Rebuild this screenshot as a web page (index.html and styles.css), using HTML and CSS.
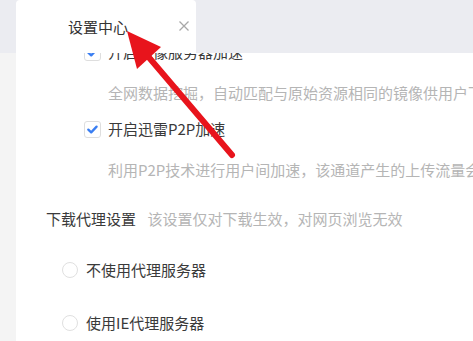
FILE: index.html
```html
<!DOCTYPE html>
<html lang="zh-CN">
<head>
<meta charset="utf-8">
<title>设置中心</title>
<link rel="stylesheet" href="styles.css">
</head>
<body>
<div class="window">
  <header class="tabbar">
    <div class="tab">
      <span class="tab-title">设置中心</span>
      <svg class="tab-close" width="10" height="10" viewBox="0 0 10 10"><path d="M0.5 0.5L9.5 9.5M9.5 0.5L0.5 9.5" stroke="#a8a8a8" stroke-width="1.3" fill="none"/></svg>
    </div>
  </header>
  <div class="body">
    <aside class="side"></aside>
    <main class="panel">
      <div class="scroll">
        <div class="check-group">
          <div class="check-row">
            <span class="checkbox"><svg width="15" height="15" viewBox="0 0 15 15"><path d="M3.3 7.6L6.2 10.4L11.6 4.6" stroke="#3a7ef2" stroke-width="2.3" fill="none" stroke-linecap="round" stroke-linejoin="round"/></svg></span>
            <span class="label">开启镜像服务器加速</span>
          </div>
          <div class="desc">全网数据挖掘，自动匹配与原始资源相同的镜像供用户下载加速</div>
        </div>
        <div class="check-group">
          <div class="check-row">
            <span class="checkbox"><svg width="15" height="15" viewBox="0 0 15 15"><path d="M3.3 7.6L6.2 10.4L11.6 4.6" stroke="#3a7ef2" stroke-width="2.3" fill="none" stroke-linecap="round" stroke-linejoin="round"/></svg></span>
            <span class="label">开启迅雷P2P加速</span>
          </div>
          <div class="desc">利用P2P技术进行用户间加速，该通道产生的上传流量会提升下载速度</div>
        </div>
        <div class="section-head">
          <span class="section-title">下载代理设置</span>
          <span class="section-note">该设置仅对下载生效，对网页浏览无效</span>
        </div>
        <div class="radio-list">
          <div class="radio-row"><span class="radio"></span><span class="label">不使用代理服务器</span></div>
          <div class="radio-row"><span class="radio"></span><span class="label">使用IE代理服务器</span></div>
        </div>
      </div>
    </main>
  </div>
  <svg class="annotation" width="473" height="341" viewBox="0 0 473 341">
    <line x1="232" y1="155" x2="146" y2="54" stroke="#e8141c" stroke-width="6" stroke-linecap="round"/>
    <polygon points="127,31 161,47 137,69" fill="#e8141c"/>
  </svg>
</div>
</body>
</html>
```

FILE: styles.css
```css
html, body {
  margin: 0;
  padding: 0;
  width: 473px;
  height: 341px;
  overflow: hidden;
  background: #ffffff;
}

.window {
  position: relative;
  width: 473px;
  height: 341px;
  display: flex;
  flex-direction: column;
  font-family: "Noto Sans CJK SC", "Noto Sans", sans-serif;
  font-size: 15px;
  color: #3a3a3a;
}

.tabbar {
  height: 53px;
  flex: 0 0 53px;
  background: #ebecf1;
  display: flex;
  padding-left: 16px;
  position: relative;
  z-index: 2;
}

.tab {
  width: 180px;
  height: 53px;
  background: #ffffff;
  border-radius: 4px 4px 0 0;
  display: flex;
  align-items: center;
  padding-left: 52px;
  padding-right: 7px;
  box-sizing: border-box;
}

.tab-title {
  color: #333333;
  font-size: 15px;
  line-height: 20px;
}

.tab-close {
  margin-left: auto;
  margin-top: -1px;
}

.body {
  flex: 1;
  display: flex;
  min-height: 0;
}

.side {
  width: 16px;
  flex: 0 0 16px;
  background: #f4f4f4;
}

.panel {
  flex: 1;
  overflow: hidden;
  background: #ffffff;
  white-space: nowrap;
}

.scroll {
  margin-top: -11px;
}

.check-group + .check-group {
  margin-top: 16px;
}

.check-row {
  display: flex;
  align-items: center;
  height: 20px;
  padding-left: 68px;
}

.checkbox {
  width: 17px;
  height: 17px;
  box-sizing: border-box;
  border: 1px solid #dedede;
  border-radius: 3px;
  background: #fff;
  display: flex;
  align-items: center;
  justify-content: center;
  margin-right: 7px;
}

.label {
  line-height: 20px;
  color: #3a3a3a;
}

.desc {
  margin-top: 21px;
  padding-left: 92px;
  line-height: 20px;
  color: #b5b5b5;
}

.section-head {
  margin-top: 29px;
  padding-left: 30px;
  line-height: 20px;
}

.section-title {
  color: #3a3a3a;
}

.section-note {
  color: #b5b5b5;
  margin-left: 8px;
}

.radio-list {
  margin-top: 31px;
  display: flex;
  flex-direction: column;
  gap: 33px;
}

.radio-row {
  display: flex;
  align-items: center;
  height: 20px;
  padding-left: 46px;
}

.radio {
  width: 16px;
  height: 16px;
  box-sizing: border-box;
  border: 1px solid #e0e0e0;
  border-radius: 50%;
  margin-right: 8px;
}

.annotation {
  position: absolute;
  left: 0;
  top: 0;
  z-index: 5;
  pointer-events: none;
}
```
